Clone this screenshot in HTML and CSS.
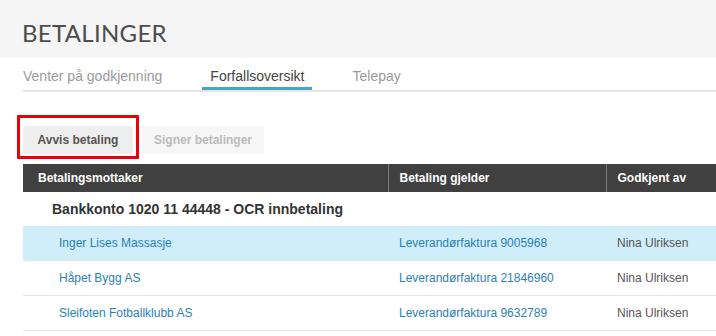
FILE: index.html
```html
<!DOCTYPE html>
<html lang="no">
<head>
<meta charset="utf-8">
<title>Betalinger</title>
<link rel="stylesheet" href="styles.css">
</head>
<body>
<header class="page-head">
  <h1 class="title">BETALINGER</h1>
</header>
<nav class="tabs">
  <a class="tab">Venter på godkjenning</a>
  <a class="tab active">Forfallsoversikt</a>
  <a class="tab">Telepay</a>
</nav>
<div class="actions">
  <button class="btn btn-primary">Avvis betaling</button>
  <button class="btn btn-disabled">Signer betalinger</button>
  <span class="highlight-box"></span>
</div>
<table class="grid">
  <colgroup>
    <col class="c1"><col class="c2"><col class="c3">
  </colgroup>
  <thead>
    <tr>
      <th>Betalingsmottaker</th>
      <th class="sep">Betaling gjelder</th>
      <th class="sep">Godkjent av</th>
    </tr>
  </thead>
  <tbody>
    <tr class="group">
      <td colspan="3">Bankkonto 1020 11 44448 - OCR innbetaling</td>
    </tr>
    <tr class="row selected">
      <td class="name">Inger Lises Massasje</td>
      <td class="ref">Leverandørfaktura 9005968</td>
      <td class="who">Nina Ulriksen</td>
    </tr>
    <tr class="row">
      <td class="name">Håpet Bygg AS</td>
      <td class="ref">Leverandørfaktura 21846960</td>
      <td class="who">Nina Ulriksen</td>
    </tr>
    <tr class="row">
      <td class="name">Sleifoten Fotballklubb AS</td>
      <td class="ref">Leverandørfaktura 9632789</td>
      <td class="who">Nina Ulriksen</td>
    </tr>
  </tbody>
</table>
</body>
</html>
```
FILE: styles.css
```css
html, body {
  margin: 0;
  padding: 0;
  overflow: hidden;
  background: #fff;
}
body {
  font-family: "Liberation Sans", Arial, sans-serif;
  width: 716px;
  height: 336px;
}
.page-head {
  background: #f5f5f5;
  height: 58px;
  box-sizing: border-box;
  padding: 21px 0 0 22px;
}
.title {
  margin: 0;
  font-family: Lato, "Open Sans", sans-serif;
  font-weight: 400;
  font-size: 24px;
  line-height: 24px;
  letter-spacing: 0.3px;
  color: #4d4d4d;
}
.tabs {
  display: flex;
  gap: 32px;
  margin-left: 23px;
  border-bottom: 2px solid #e6e6e6;
}
.tab {
  padding: 8px 8px 1px;
  font-size: 14px;
  line-height: 20px;
  color: #9a9a9a;
  border-bottom: 3px solid transparent;
  white-space: nowrap;
}
.tab:first-child {
  padding-left: 0;
}
.tab.active {
  color: #444;
  border-bottom-color: #4aa4c6;
}
.actions {
  position: relative;
  display: flex;
  gap: 9px;
  padding: 34px 0 0 23px;
  height: 28px;
}
.btn {
  box-sizing: border-box;
  font-family: "Liberation Sans", Arial, sans-serif;
  font-weight: bold;
  font-size: 12px;
  line-height: 28px;
  height: 28px;
  padding: 0;
  border: 0;
  border-radius: 2px;
  white-space: nowrap;
  text-align: center;
}
.btn-primary {
  background: #eeeeee;
  color: #555;
  width: 110px;
}
.btn-disabled {
  background: #f6f6f6;
  color: #bbbbbb;
  width: 122px;
}
.highlight-box {
  position: absolute;
  left: 17px;
  top: 23px;
  width: 116px;
  height: 38px;
  border: 3px solid #e8000a;
  border-radius: 1px;
}
.grid {
  margin: 10px 0 0 23px;
  width: 693px;
  border-collapse: collapse;
  table-layout: fixed;
  font-size: 12px;
}
.c1 { width: 365px; }
.c2 { width: 218px; }
.grid th {
  background: #404040;
  color: #fff;
  font-weight: bold;
  text-align: left;
  height: 28px;
  padding: 0 0 0 11px;
  line-height: 14px;
  white-space: nowrap;
}
.grid th:first-child {
  padding-left: 15px;
}
.grid th.sep {
  border-left: 1px solid #7a7a7a;
}
.group td {
  height: 34px;
  padding: 0 0 0 29px;
  font-size: 14px;
  font-weight: bold;
  color: #333;
}
.row td {
  height: 34px;
  padding: 0 0 0 11px;
  border-bottom: 1px solid #e4e4e4;
  color: #2b7fb9;
  white-space: nowrap;
}
.row td.name {
  padding-left: 36px;
}
.row td.who {
  color: #555;
}
.row.selected td {
  background: #d0eef9;
}
```
